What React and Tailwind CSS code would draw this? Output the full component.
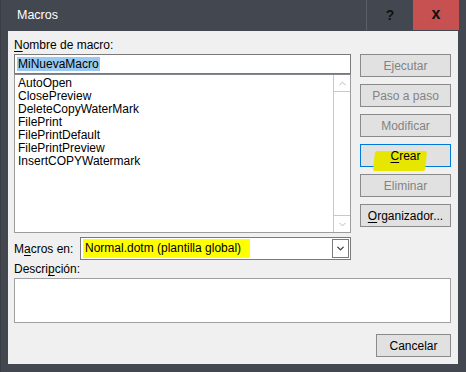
import { ChevronDown, ChevronUp } from 'lucide-react'

const FONT = { fontFamily: '"Liberation Sans", Arial, sans-serif' }

const MACROS = [
  'AutoOpen',
  'ClosePreview',
  'DeleteCopyWaterMark',
  'FilePrint',
  'FilePrintDefault',
  'FilePrintPreview',
  'InsertCOPYWatermark',
]

function Btn({ children, disabled, primary, className = '' }) {
  return (
    <div
      className={`h-[23px] flex items-center justify-center bg-[#e1e1e1] border text-[12px] ${
        primary ? 'border-[#0078d7]' : 'border-[#8a8a8a]'
      } ${disabled ? 'text-[#838383]' : 'text-black'} ${className}`}
    >
      {children}
    </div>
  )
}

export default function App() {
  return (
    <div style={FONT} className="w-[466px] h-[372px] bg-[#434750] border-l border-[#3a3d44] overflow-hidden">
      {/* title bar */}
      <div className="h-[30px] flex items-center">
        <span className="ml-[16px] text-white text-[12.5px]">Macros</span>
        <div className="ml-auto flex h-full">
          <div className="w-[47px] h-full border-l border-[#5c6069] flex items-center justify-center text-[#111] font-bold text-[14px]">
            ?
          </div>
          <div className="w-[46px] h-full bg-[#c75050] flex items-center justify-center text-[#111] font-bold text-[16px] pb-[2px]">
            x
          </div>
          <div className="w-[7px]" />
        </div>
      </div>

      {/* client area */}
      <div className="mt-px ml-[7px] w-[450px] h-[333px] bg-[#f0f0f0] pl-[6px] pr-[7px] flex flex-col text-[12px] text-black">
        <div className="flex">
          <div className="w-[337px] flex flex-col">
            <div className="mt-[7px] h-[15px] leading-[15px]">
              <span className="underline underline-offset-2">N</span>ombre de macro:
            </div>
            <div className="mt-px h-[20px] bg-white border border-[#7a7a7a] flex items-center pl-[2px]">
              <span className="bg-[#99c9ef] px-px leading-[14px]">MiNuevaMacro</span>
            </div>
            <div className="h-[159px] bg-white border border-[#9c9c9c] border-t-[#828790] flex">
              <div className="flex-1 pl-[3px] pt-[2px] leading-[13px]">
                {MACROS.map((m) => (
                  <div key={m}>{m}</div>
                ))}
              </div>
              <div className="w-[17px] border-l border-[#c8c8c8] flex flex-col">
                <div className="h-[17px] border-b border-[#c8c8c8] flex items-center justify-center">
                  <ChevronUp className="w-[11px] h-[11px] text-[#b5b5b5]" strokeWidth={2} />
                </div>
                <div className="flex-1" />
                <div className="h-[17px] border-t border-[#c8c8c8] flex items-center justify-center">
                  <ChevronDown className="w-[11px] h-[11px] text-[#b5b5b5]" strokeWidth={2} />
                </div>
              </div>
            </div>
          </div>

          <div className="ml-[9px] w-[91px] pt-[23px] flex flex-col gap-[7px]">
            <Btn disabled>Ejecutar</Btn>
            <Btn disabled>Paso a paso</Btn>
            <Btn disabled>Modificar</Btn>
            <Btn primary className="relative">
              <span className="absolute left-[13px] top-[6px] w-[52px] h-[20px] bg-[#e6e600] -skew-x-6 rounded-[2px]" />
              <span className="relative">
                <span className="underline underline-offset-2">C</span>rear
              </span>
            </Btn>
            <Btn disabled>Eliminar</Btn>
            <Btn>
              <span className="underline underline-offset-2">O</span>rganizador...
            </Btn>
          </div>
        </div>

        {/* macros en */}
        <div className="mt-[4px] h-[23px] flex items-center">
          <div className="w-[66px]">
            M<span className="underline underline-offset-2">a</span>cros en:
          </div>
          <div className="w-[271px] h-full bg-white border border-[#7a7a7a] flex items-center">
            <span className="ml-[2px] bg-[#ffff00] px-[2px] h-[19px] leading-[19px] w-[167px]">
              Normal.dotm (plantilla global)
            </span>
            <div className="ml-auto mr-px w-[17px] h-[19px] border border-[#7a7a7a] flex items-center justify-center">
              <ChevronDown className="w-[11px] h-[11px] text-[#404040]" strokeWidth={3} />
            </div>
          </div>
        </div>

        <div className="mt-[2px] h-[15px] leading-[15px]">
          Descri<span className="underline underline-offset-2">p</span>ción:
        </div>
        <div className="mt-px h-[45px] bg-white border border-[#a0a0a0]" />

        <div className="mt-[11px] flex justify-end">
          <Btn className="w-[75px]">Cancelar</Btn>
        </div>
      </div>
    </div>
  )
}
